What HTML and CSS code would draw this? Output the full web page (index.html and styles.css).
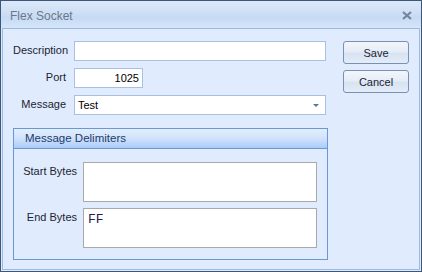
FILE: index.html
```html
<!DOCTYPE html>
<html lang="en">
<head>
    <meta charset="UTF-8">
    <title>Flex Socket</title>
    <link rel="stylesheet" href="styles.css">
</head>
<body>
    <div class="window">
        <div class="titlebar">
            <span class="title">Flex Socket</span>
            <svg class="close" width="10" height="9" viewBox="0 0 10 9">
                <path d="M1 1 L9 8 M9 1 L1 8" stroke="#77839a" stroke-width="2.2" fill="none"/>
            </svg>
        </div>

        <div class="panel">
            <div class="main">
                <div class="fields">
                    <label class="label">Description</label>
                    <div class="edit"></div>

                    <label class="label">Port</label>
                    <div class="edit port">1025</div>

                    <label class="label">Message</label>
                    <div class="edit combo">
                        <span>Test</span>
                        <span class="arrow"></span>
                    </div>
                </div>

                <div class="group">
                    <div class="group-header">Message Delimiters</div>
                    <div class="group-body">
                        <label class="label top">Start Bytes</label>
                        <div class="memo"></div>

                        <label class="label top">End Bytes</label>
                        <div class="memo">FF</div>
                    </div>
                </div>
            </div>

            <div class="buttons">
                <button>Save</button>
                <button>Cancel</button>
            </div>
        </div>
    </div>
</body>
</html>
```

FILE: styles.css
```css
body {
    margin: 0;
    font-family: 'Liberation Sans', Arial, sans-serif;
    font-size: 11px;
    color: #1b2433;
}

.window {
    width: 420px;
    height: 270px;
    border: 1px solid #3b5878;
    background-color: #dfeafb;
    display: flex;
    flex-direction: column;
}

.titlebar {
    height: 27px;
    display: flex;
    align-items: center;
    justify-content: space-between;
    padding: 0 9px 0 9px;
    background: linear-gradient(to bottom, #dce8f8 0%, #cfe0f6 40%, #c6daf4 60%, #d6e5f9 100%);
}

.title {
    font-size: 12px;
    color: #6b7789;
    padding-top: 2px;
}

.close {
    margin-top: 2px;
}

.panel {
    flex: 1;
    margin: 0 1px 1px 1px;
    border: 1px solid #9cbbe4;
    background-color: #e0ecfd;
    display: flex;
    padding: 12px 0 0 10px;
}

.main {
    width: 315px;
}

.fields {
    display: grid;
    grid-template-columns: 53px 252px;
    column-gap: 8px;
    row-gap: 7px;
}

.label {
    text-align: right;
    align-self: center;
    color: #1b2433;
    padding-bottom: 2px;
}

.label.top {
    align-self: start;
    padding-top: 3px;
}

.edit {
    height: 18px;
    border: 1px solid #a8c1e3;
    background-color: #fff;
    line-height: 18px;
    padding: 0 2px;
    color: #000;
}

.edit.port {
    width: 62px;
    text-align: right;
    padding-right: 3px;
}

.combo {
    display: flex;
    justify-content: space-between;
    align-items: center;
    padding-left: 3px;
}

.arrow {
    width: 0;
    height: 0;
    margin-right: 4px;
    border-left: 3px solid transparent;
    border-right: 3px solid transparent;
    border-top: 3px solid #5d7393;
}

.group {
    margin-top: 13px;
    height: 130px;
    border: 1px solid #6a98d3;
}

.group-header {
    height: 19px;
    line-height: 19px;
    padding-left: 11px;
    color: #1d3a6c;
    font-size: 11.5px;
    border-bottom: 1px solid #6a98d3;
    background: linear-gradient(to bottom, #e3eefd 0%, #d0e2fb 50%, #a9ccf8 100%);
}

.group-body {
    display: grid;
    grid-template-columns: 54px 234px;
    column-gap: 6px;
    row-gap: 6px;
    padding: 13px 9px 0 9px;
}

.memo {
    border: 1px solid #a9a9a9;
    background-color: #fff;
    padding: 3px 4px 0 4px;
    box-sizing: border-box;
    height: 40px;
    font-family: 'Liberation Mono', 'Courier New', monospace;
    font-size: 13px;
    color: #24204a;
}

.buttons {
    display: flex;
    flex-direction: column;
    gap: 6px;
    margin-left: 15px;
}

button {
    width: 66px;
    height: 23px;
    border: 1px solid #7790b4;
    border-radius: 3px;
    background: linear-gradient(to bottom, #f3f6fb 0%, #e6edf7 45%, #d8e3f2 55%, #e4ecf7 100%);
    font-family: 'Liberation Sans', Arial, sans-serif;
    font-size: 11px;
    color: #1b2433;
    padding: 0;
}
```
